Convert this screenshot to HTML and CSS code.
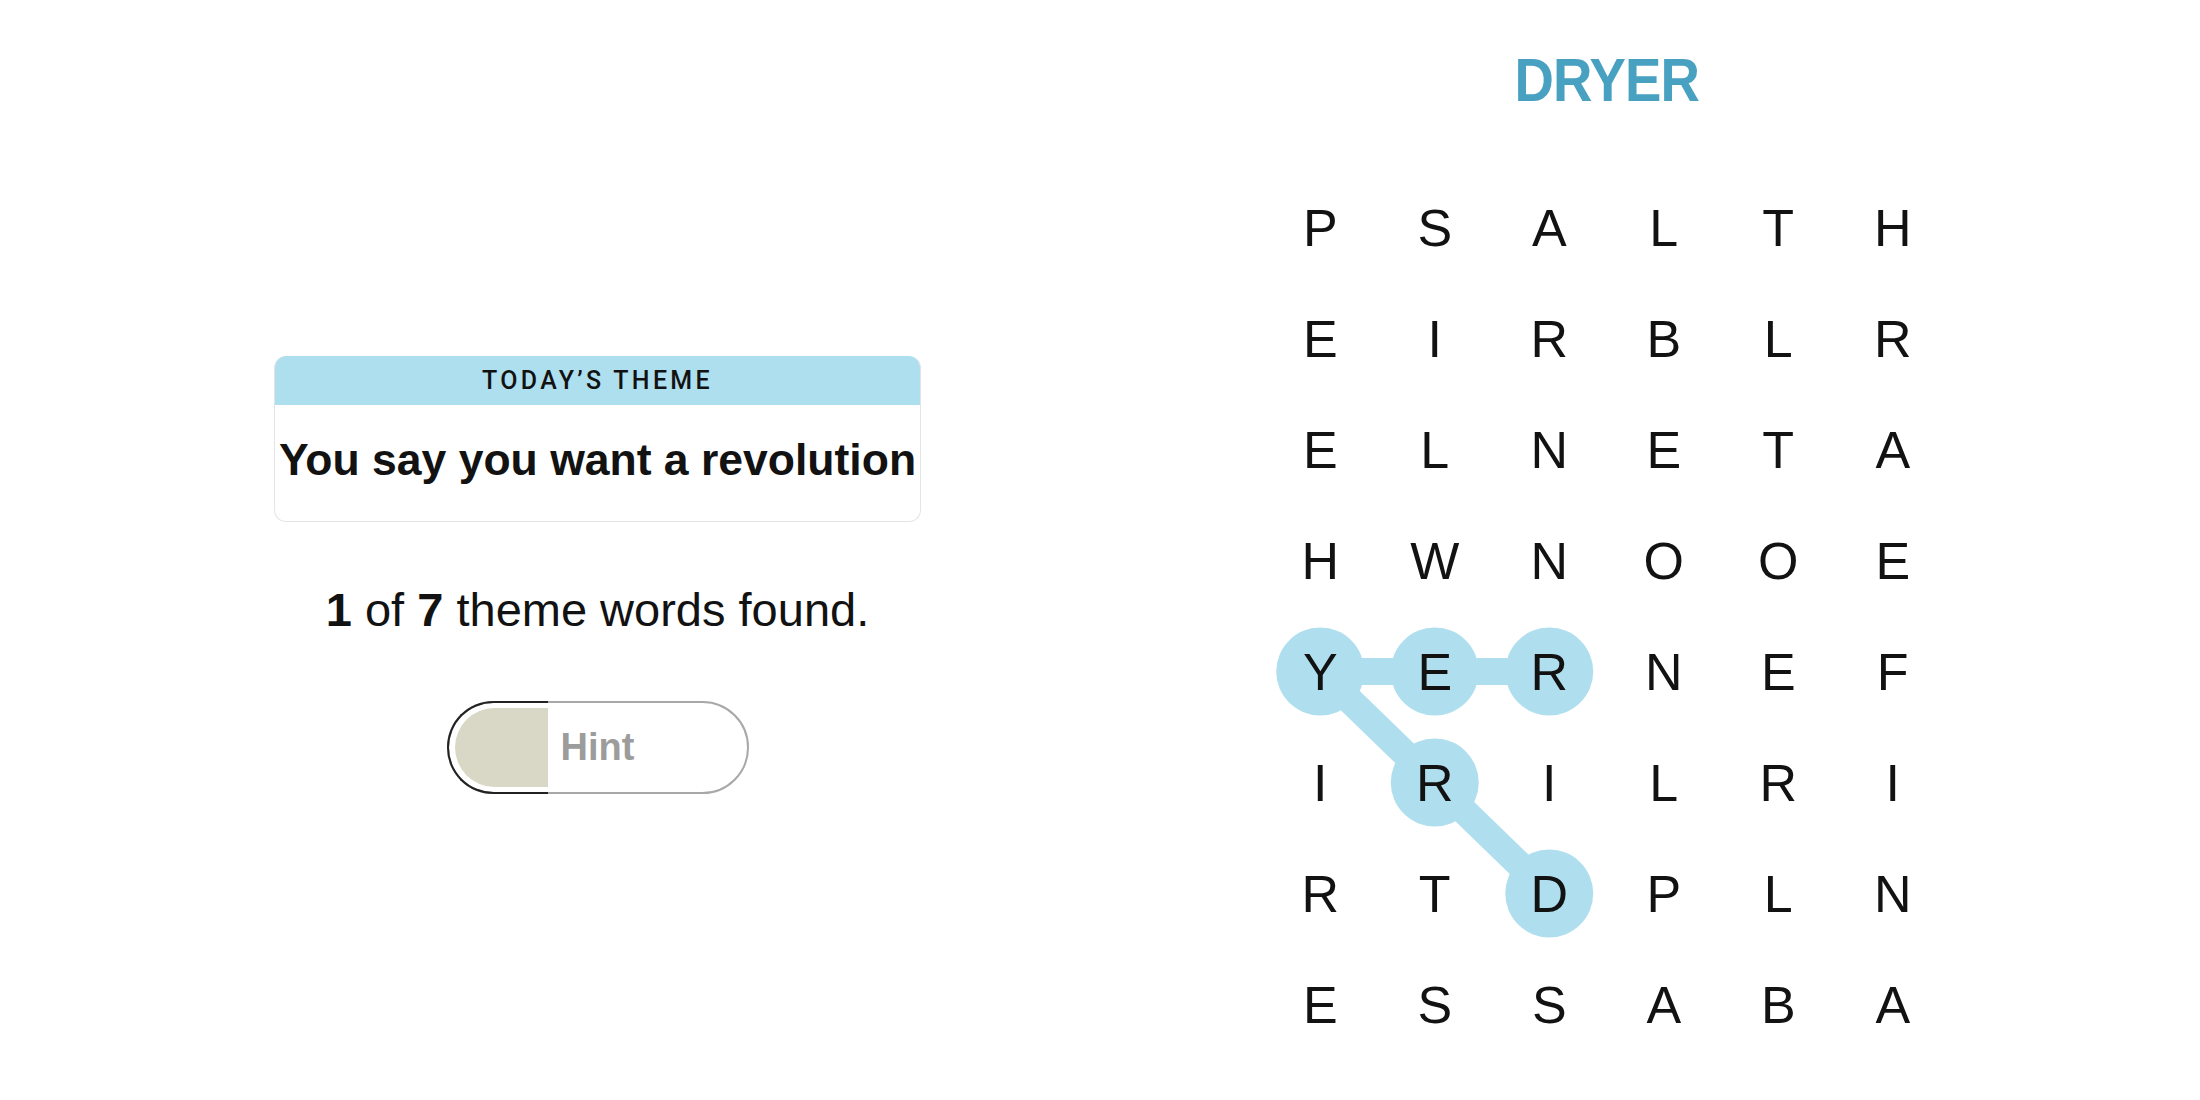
FILE: index.html
```html
<!DOCTYPE html>
<html>
<head>
  <title>Strands</title>
  <link rel="stylesheet" href="styles.css">
</head>
<body>
  <main class="game">
    <section class="side">
      <div class="theme-card">
        <div class="theme-label">TODAY’S THEME</div>
        <div class="theme-text">You say you want a revolution</div>
      </div>
      <p class="progress"><b>1</b> of <b>7</b> theme words found.</p>
      <button class="hint"><span class="hint-fill"></span><span class="hint-label">Hint</span></button>
    </section>

    <section class="board">
      <div class="current-word">DRYER</div>
      <div class="grid-wrap">
        <svg class="trail" width="687" height="888" viewBox="0 0 687 888">
          <g stroke="#afdfee" stroke-width="27" stroke-linecap="round" fill="none">
            <line x1="57.25" y1="499.5" x2="286.25" y2="499.5"/>
            <line x1="57.25" y1="499.5" x2="286.25" y2="721.5"/>
          </g>
          <g fill="#afdfee">
            <circle cx="57.25" cy="499.5" r="44"/>
            <circle cx="171.75" cy="499.5" r="44"/>
            <circle cx="286.25" cy="499.5" r="44"/>
            <circle cx="171.75" cy="610.5" r="44"/>
            <circle cx="286.25" cy="721.5" r="44"/>
          </g>
        </svg>
        <div class="grid">
          <span>P</span><span>S</span><span>A</span><span>L</span><span>T</span><span>H</span>
          <span>E</span><span>I</span><span>R</span><span>B</span><span>L</span><span>R</span>
          <span>E</span><span>L</span><span>N</span><span>E</span><span>T</span><span>A</span>
          <span>H</span><span>W</span><span>N</span><span>O</span><span>O</span><span>E</span>
          <span>Y</span><span>E</span><span>R</span><span>N</span><span>E</span><span>F</span>
          <span>I</span><span>R</span><span>I</span><span>L</span><span>R</span><span>I</span>
          <span>R</span><span>T</span><span>D</span><span>P</span><span>L</span><span>N</span>
          <span>E</span><span>S</span><span>S</span><span>A</span><span>B</span><span>A</span>
        </div>
      </div>
    </section>
  </main>
</body>
</html>
```

FILE: styles.css
```css
body {
  margin: 0;
  background: #fff;
  color: #121212;
  font-family: "Liberation Sans", Arial, sans-serif;
}
.game {
  display: grid;
  grid-template-columns: 1195px 823px;
  height: 1100px;
}

/* left column */
.side {
  display: flex;
  flex-direction: column;
  align-items: center;
  padding-top: 356px;
}
.theme-card {
  width: 645px;
  border: 1px solid #e4e4e4;
  border-top: none;
  border-radius: 12px;
  overflow: hidden;
}
.theme-label {
  background: #aedfee;
  height: 49px;
  line-height: 50px;
  text-align: center;
  font-family: Roboto, "Liberation Sans", sans-serif;
  font-size: 25px;
  font-weight: 500;
  letter-spacing: 3.3px;
}
.theme-text {
  box-sizing: border-box;
  height: 116px;
  padding-bottom: 6px;
  display: flex;
  align-items: center;
  justify-content: center;
  font-size: 44.5px;
  font-weight: 700;
}
.progress {
  margin: 60px 0 0;
  font-size: 47px;
  line-height: 56px;
}
.hint {
  position: relative;
  box-sizing: border-box;
  width: 302px;
  height: 93px;
  margin-top: 63px;
  padding: 0;
  border: 2px solid #a8a8a8;
  border-radius: 47px;
  background: #fff;
  color: #9c9c9c;
  font: 700 38px "Liberation Sans", Arial, sans-serif;
}
.hint::before {
  content: "";
  position: absolute;
  left: -2px;
  top: -2px;
  bottom: -2px;
  width: 101px;
  box-sizing: border-box;
  border: 2px solid #222;
  border-right: 0;
  border-radius: 47px 0 0 47px;
}
.hint-fill {
  position: absolute;
  left: 6px;
  top: 5px;
  bottom: 5px;
  width: 93px;
  background: #d9d8c6;
  border-radius: 42px 0 0 42px;
}
.hint-label {
  position: relative;
}

/* board */
.board {
  display: flex;
  flex-direction: column;
  align-items: center;
  padding-top: 50px;
}
.current-word {
  height: 60px;
  line-height: 60px;
  margin-bottom: 62px;
  font-size: 62px;
  font-weight: 700;
  letter-spacing: -1px;
  color: #49a1c1;
  transform: scaleX(0.88);
}
.grid-wrap {
  position: relative;
  width: 687px;
  height: 888px;
}
.trail {
  position: absolute;
  left: 0;
  top: 0;
}
.grid {
  position: relative;
  display: grid;
  grid-template-columns: repeat(6, 114.5px);
  grid-auto-rows: 111px;
}
.grid span {
  display: flex;
  align-items: center;
  justify-content: center;
  font-size: 52px;
}
```
